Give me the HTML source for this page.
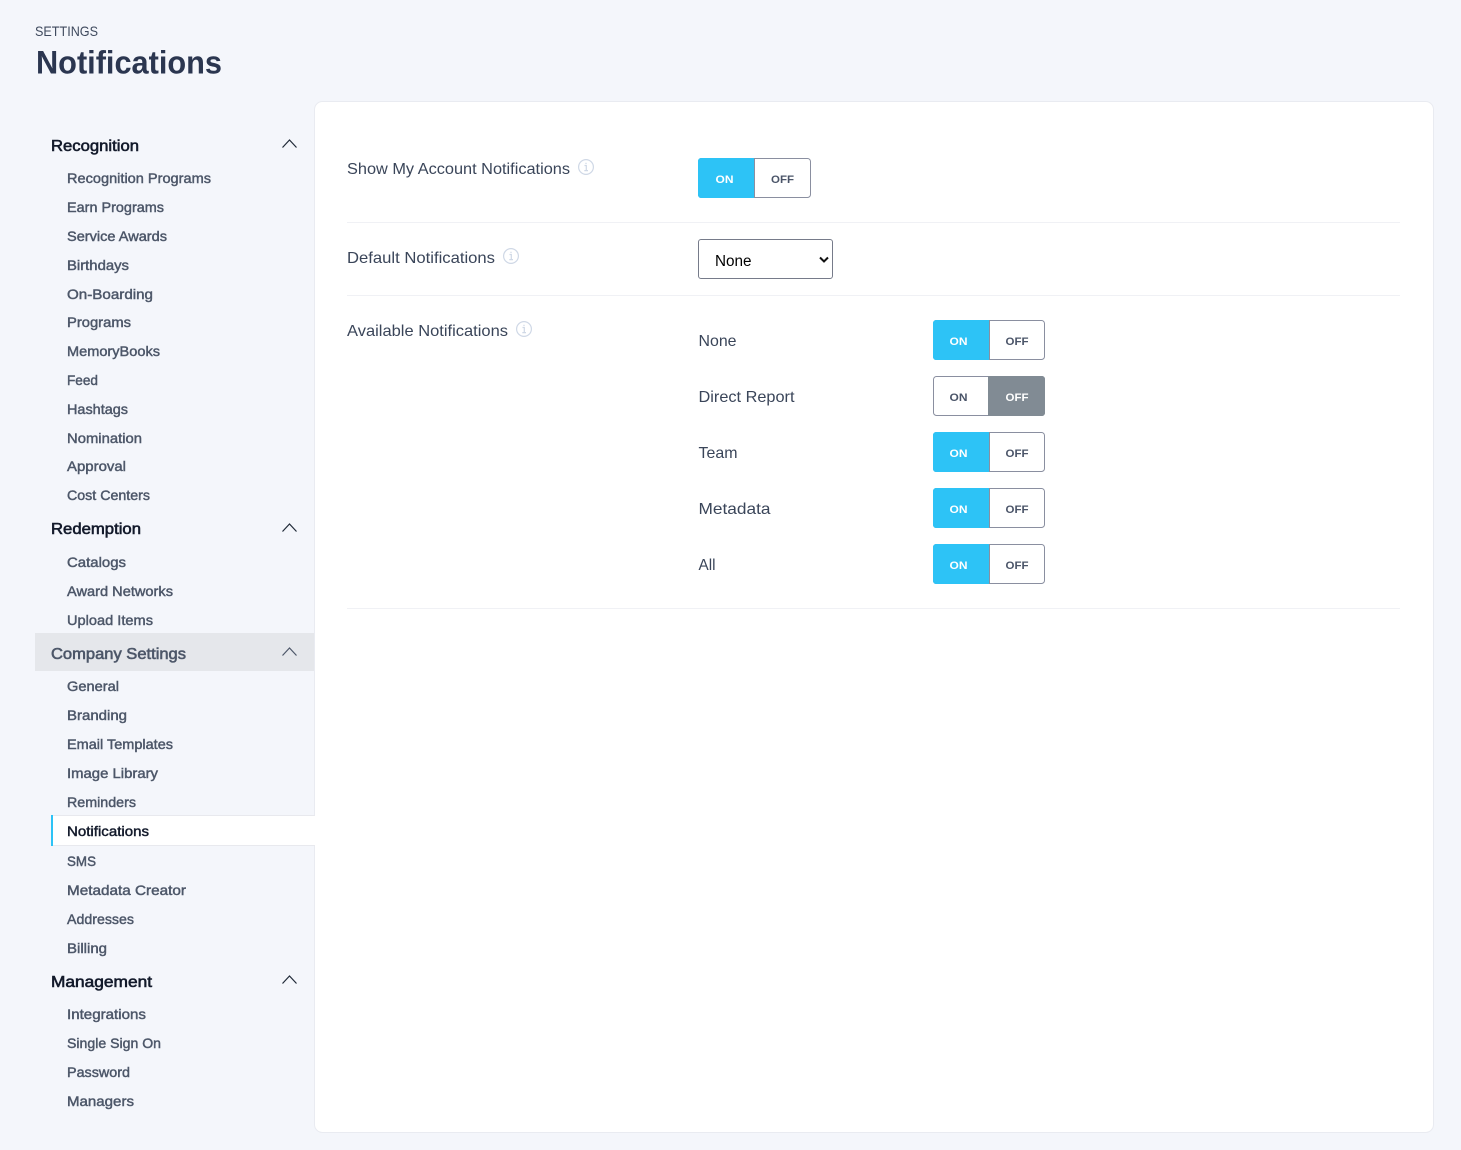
<!DOCTYPE html>
<html lang="en">
<head>
<meta charset="utf-8">
<title>Notifications</title>
<style>
html,body{margin:0;padding:0;width:1461px;height:1150px;overflow:hidden;background:#f4f6fb}
svg{position:absolute;left:0;top:0;display:block}
text{font-family:"Liberation Sans",sans-serif}
.nav{font-size:14px;fill:#4d5769;stroke:#4d5769;stroke-width:.45px}
.head{font-size:16px;fill:#131a2b;stroke:#131a2b;stroke-width:.6px}
.label{font-size:16px;fill:#3a4559}
.tg{font-size:11px;font-weight:bold;text-anchor:middle}
.chev{fill:none;stroke:#1f2937;stroke-width:1.2}
select{position:absolute;z-index:1;left:698px;top:239px;width:135px;height:40px;box-sizing:border-box;border:1px solid #767b8a;border-radius:3px;background:#fff;color:#000;font:15.3px "Liberation Sans",sans-serif;padding:4px 0 0 16px;margin:0;appearance:none;-webkit-appearance:none}
</style>
</head>
<body>
<svg width="1461" height="1150" viewBox="0 0 1461 1150" xmlns="http://www.w3.org/2000/svg">
<rect x="314.5" y="101.5" width="1119" height="1031" rx="8" fill="#fff" stroke="#e9ebf1"/>
<rect x="35" y="633" width="279" height="38" fill="#e5e7eb"/>
<rect x="51" y="815" width="264" height="31" fill="#fff"/>
<rect x="51" y="815" width="264" height="1" fill="#e8e9ee"/>
<rect x="51" y="845" width="264" height="1" fill="#e8e9ee"/>
<rect x="51" y="815" width="2" height="31" fill="#2dc3f6"/>
<rect x="347" y="222" width="1053" height="1" fill="#f0f1f5"/>
<rect x="347" y="295" width="1053" height="1" fill="#f0f1f5"/>
<rect x="347" y="608" width="1053" height="1" fill="#f0f1f5"/>

<text x="35" y="36" font-size="14" fill="#3f4a5e" textLength="63" lengthAdjust="spacingAndGlyphs">SETTINGS</text>
<text x="36" y="73.5" font-size="32" font-weight="bold" fill="#2b3650" textLength="186" lengthAdjust="spacingAndGlyphs">Notifications</text>

<text class="head" x="51" y="151" textLength="88" lengthAdjust="spacingAndGlyphs">Recognition</text>
<path class="chev" d="M282.5 147.5L289.5 140L296.5 147.5"/>
<text class="nav" x="67" y="183" textLength="144" lengthAdjust="spacingAndGlyphs">Recognition Programs</text>
<text class="nav" x="67" y="212" textLength="97" lengthAdjust="spacingAndGlyphs">Earn Programs</text>
<text class="nav" x="67" y="241" textLength="100" lengthAdjust="spacingAndGlyphs">Service Awards</text>
<text class="nav" x="67" y="270" textLength="62" lengthAdjust="spacingAndGlyphs">Birthdays</text>
<text class="nav" x="67" y="299" textLength="86" lengthAdjust="spacingAndGlyphs">On-Boarding</text>
<text class="nav" x="67" y="327" textLength="64" lengthAdjust="spacingAndGlyphs">Programs</text>
<text class="nav" x="67" y="356" textLength="93" lengthAdjust="spacingAndGlyphs">MemoryBooks</text>
<text class="nav" x="67" y="385" textLength="31" lengthAdjust="spacingAndGlyphs">Feed</text>
<text class="nav" x="67" y="414" textLength="61" lengthAdjust="spacingAndGlyphs">Hashtags</text>
<text class="nav" x="67" y="443" textLength="75" lengthAdjust="spacingAndGlyphs">Nomination</text>
<text class="nav" x="67" y="471" textLength="59" lengthAdjust="spacingAndGlyphs">Approval</text>
<text class="nav" x="67" y="500" textLength="83" lengthAdjust="spacingAndGlyphs">Cost Centers</text>

<text class="head" x="51" y="534" textLength="90" lengthAdjust="spacingAndGlyphs">Redemption</text>
<path class="chev" d="M282.5 531.5L289.5 524L296.5 531.5"/>
<text class="nav" x="67" y="567" textLength="59" lengthAdjust="spacingAndGlyphs">Catalogs</text>
<text class="nav" x="67" y="596" textLength="106" lengthAdjust="spacingAndGlyphs">Award Networks</text>
<text class="nav" x="67" y="625" textLength="86" lengthAdjust="spacingAndGlyphs">Upload Items</text>

<text class="head" x="51" y="659" textLength="135" lengthAdjust="spacingAndGlyphs" style="fill:#4d5769;stroke:#4d5769">Company Settings</text>
<path class="chev" d="M282.5 655.5L289.5 648L296.5 655.5" style="stroke:#4d5769"/>
<text class="nav" x="67" y="691" textLength="52" lengthAdjust="spacingAndGlyphs">General</text>
<text class="nav" x="67" y="720" textLength="60" lengthAdjust="spacingAndGlyphs">Branding</text>
<text class="nav" x="67" y="749" textLength="106" lengthAdjust="spacingAndGlyphs">Email Templates</text>
<text class="nav" x="67" y="778" textLength="91" lengthAdjust="spacingAndGlyphs">Image Library</text>
<text class="nav" x="67" y="807" textLength="69" lengthAdjust="spacingAndGlyphs">Reminders</text>
<text class="nav" x="67" y="836" textLength="82" lengthAdjust="spacingAndGlyphs" style="fill:#131a2b;stroke:#131a2b">Notifications</text>
<text class="nav" x="67" y="866" textLength="29" lengthAdjust="spacingAndGlyphs">SMS</text>
<text class="nav" x="67" y="895" textLength="119" lengthAdjust="spacingAndGlyphs">Metadata Creator</text>
<text class="nav" x="67" y="924" textLength="67" lengthAdjust="spacingAndGlyphs">Addresses</text>
<text class="nav" x="67" y="953" textLength="40" lengthAdjust="spacingAndGlyphs">Billing</text>

<text class="head" x="51" y="987" textLength="101" lengthAdjust="spacingAndGlyphs">Management</text>
<path class="chev" d="M282.5 983.5L289.5 976L296.5 983.5"/>
<text class="nav" x="67" y="1019" textLength="79" lengthAdjust="spacingAndGlyphs">Integrations</text>
<text class="nav" x="67" y="1048" textLength="94" lengthAdjust="spacingAndGlyphs">Single Sign On</text>
<text class="nav" x="67" y="1077" textLength="63" lengthAdjust="spacingAndGlyphs">Password</text>
<text class="nav" x="67" y="1106" textLength="67" lengthAdjust="spacingAndGlyphs">Managers</text>

<text class="label" x="347" y="174" textLength="223" lengthAdjust="spacingAndGlyphs">Show My Account Notifications</text>
<g fill="none" stroke="#cfd8e6" stroke-width="1.2"><circle cx="586" cy="167" r="7.4"/><path d="M584.5 165.5H586.3V170.6M584.3 170.6H588M586 162.8V164"/></g>
<text class="label" x="347" y="263" textLength="148" lengthAdjust="spacingAndGlyphs">Default Notifications</text>
<g fill="none" stroke="#cfd8e6" stroke-width="1.2"><circle cx="511" cy="256" r="7.4"/><path d="M509.5 254.5H511.3V259.6M509.3 259.6H513M511 251.8V253"/></g>
<text class="label" x="347" y="336" textLength="161" lengthAdjust="spacingAndGlyphs">Available Notifications</text>
<g fill="none" stroke="#cfd8e6" stroke-width="1.2"><circle cx="524" cy="329" r="7.4"/><path d="M522.5 327.5H524.3V332.6M522.3 332.6H526M524 324.8V326"/></g>

<rect x="698.5" y="158.5" width="112" height="39" rx="3" fill="#fff" stroke="#8a8fa0"/>
<path d="M701 158H755V198H701a3 3 0 0 1-3-3V161a3 3 0 0 1 3-3z" fill="#2dc3f6"/>
<rect x="754" y="158" width="1" height="40" fill="#8a8fa0"/>
<text class="tg" x="724.5" y="183" fill="#fff" textLength="18" lengthAdjust="spacingAndGlyphs">ON</text>
<text class="tg" x="782.5" y="183" fill="#4a5468" textLength="23" lengthAdjust="spacingAndGlyphs">OFF</text>

<text class="label" x="698.5" y="346" textLength="38" lengthAdjust="spacingAndGlyphs">None</text>
<rect x="933.5" y="320.5" width="111" height="39" rx="3" fill="#fff" stroke="#8a8fa0"/>
<path d="M936 320H990V360H936a3 3 0 0 1-3-3V323a3 3 0 0 1 3-3z" fill="#2dc3f6"/>
<rect x="989" y="320" width="1" height="40" fill="#8a8fa0"/>
<text class="tg" x="958.5" y="345" fill="#fff" textLength="18" lengthAdjust="spacingAndGlyphs">ON</text>
<text class="tg" x="1017" y="345" fill="#4a5468" textLength="23" lengthAdjust="spacingAndGlyphs">OFF</text>

<text class="label" x="698.5" y="402" textLength="96" lengthAdjust="spacingAndGlyphs">Direct Report</text>
<rect x="933.5" y="376.5" width="111" height="39" rx="3" fill="#fff" stroke="#8a8fa0"/>
<path d="M988 376H1042a3 3 0 0 1 3 3V413a3 3 0 0 1-3 3H988z" fill="#818b94"/>
<text class="tg" x="958.5" y="401" fill="#4a5468" textLength="18" lengthAdjust="spacingAndGlyphs">ON</text>
<text class="tg" x="1017" y="401" fill="#fff" textLength="23" lengthAdjust="spacingAndGlyphs">OFF</text>

<text class="label" x="698.5" y="458" textLength="39" lengthAdjust="spacingAndGlyphs">Team</text>
<rect x="933.5" y="432.5" width="111" height="39" rx="3" fill="#fff" stroke="#8a8fa0"/>
<path d="M936 432H990V472H936a3 3 0 0 1-3-3V435a3 3 0 0 1 3-3z" fill="#2dc3f6"/>
<rect x="989" y="432" width="1" height="40" fill="#8a8fa0"/>
<text class="tg" x="958.5" y="457" fill="#fff" textLength="18" lengthAdjust="spacingAndGlyphs">ON</text>
<text class="tg" x="1017" y="457" fill="#4a5468" textLength="23" lengthAdjust="spacingAndGlyphs">OFF</text>

<text class="label" x="698.5" y="514" textLength="72" lengthAdjust="spacingAndGlyphs">Metadata</text>
<rect x="933.5" y="488.5" width="111" height="39" rx="3" fill="#fff" stroke="#8a8fa0"/>
<path d="M936 488H990V528H936a3 3 0 0 1-3-3V491a3 3 0 0 1 3-3z" fill="#2dc3f6"/>
<rect x="989" y="488" width="1" height="40" fill="#8a8fa0"/>
<text class="tg" x="958.5" y="513" fill="#fff" textLength="18" lengthAdjust="spacingAndGlyphs">ON</text>
<text class="tg" x="1017" y="513" fill="#4a5468" textLength="23" lengthAdjust="spacingAndGlyphs">OFF</text>

<text class="label" x="698.5" y="570" textLength="17" lengthAdjust="spacingAndGlyphs">All</text>
<rect x="933.5" y="544.5" width="111" height="39" rx="3" fill="#fff" stroke="#8a8fa0"/>
<path d="M936 544H990V584H936a3 3 0 0 1-3-3V547a3 3 0 0 1 3-3z" fill="#2dc3f6"/>
<rect x="989" y="544" width="1" height="40" fill="#8a8fa0"/>
<text class="tg" x="958.5" y="569" fill="#fff" textLength="18" lengthAdjust="spacingAndGlyphs">ON</text>
<text class="tg" x="1017" y="569" fill="#4a5468" textLength="23" lengthAdjust="spacingAndGlyphs">OFF</text>
</svg>
<select><option>None</option></select>
<svg width="1461" height="1150" viewBox="0 0 1461 1150" xmlns="http://www.w3.org/2000/svg" style="z-index:2;pointer-events:none">
<path d="M820 257.5L824 261.5L828 257.5" fill="none" stroke="#111" stroke-width="2"/>
</svg>
</body>
</html>
